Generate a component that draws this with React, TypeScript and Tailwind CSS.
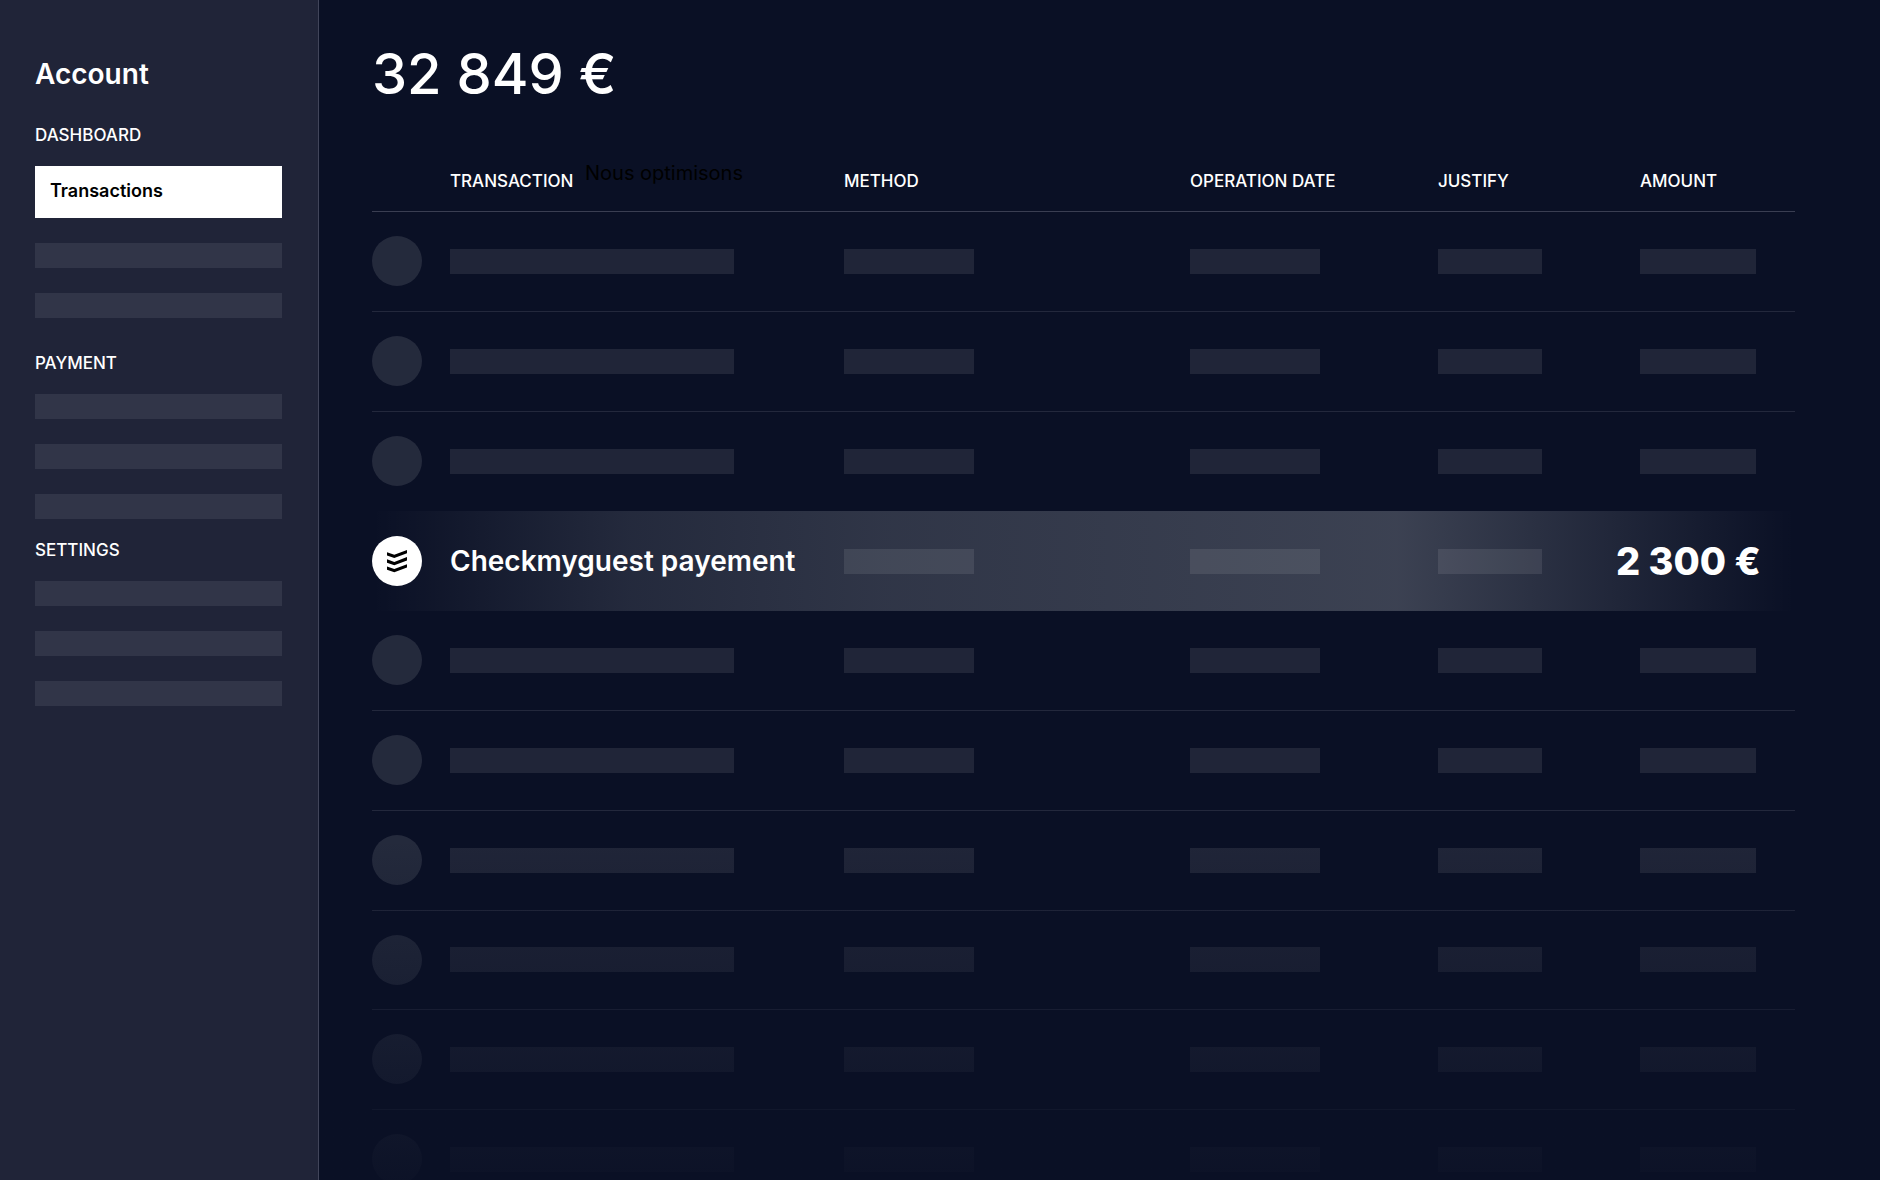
import { FC } from 'react'

interface NavSectionProps {
  title: string
  active?: string
  placeholders: number
  className?: string
}

const columns = ['Transaction', 'Method', 'Operation date', 'Justify', 'Amount']

const rows = Array.from({ length: 10 }, (_, index) => ({
  id: index,
  highlighted: index === 3
}))

const NavSection: FC<NavSectionProps> = ({ title, active, placeholders, className = '' }) => (
  <section className={className}>
    <h2 className="text-[17px] leading-6 font-medium uppercase">{title}</h2>
    <ul className="mt-[19px] flex flex-col gap-[25px]">
      {active && (
        <li>
          <a
            href="#transactions"
            className="flex h-[52px] items-center bg-white px-[15px] pb-0.5 text-lg font-semibold text-black"
          >
            {active}
          </a>
        </li>
      )}
      {Array.from({ length: placeholders }, (_, index) => (
        <li key={index} className="h-[25px] bg-[#313548]" />
      ))}
    </ul>
  </section>
)

const Bar: FC<{ className: string }> = ({ className }) => (
  <div className={`h-[25px] bg-white/9 ${className}`} />
)

const CheckmyguestLogo = () => (
  <div className="flex size-[50px] items-center justify-center rounded-full bg-white">
    <svg viewBox="0 0 20 23" className="h-[23px] w-5 fill-black" aria-hidden="true">
      <path d="M0 2.2 7.3 4.8 20 0v3.3L7.3 8.1 0 5.6z" />
      <path d="M0 9.3 7.3 11.9 20 7.1v3.3L7.3 15.2 0 12.7z" />
      <path d="M0 16.4 7.3 19 20 14.2v3.3L7.3 22.3 0 19.8z" />
    </svg>
  </div>
)

const Row: FC<{ highlighted: boolean }> = ({ highlighted }) => (
  <tr
    className={`h-[100px] nth-[3n+5]:h-[99px] ${
      highlighted
        ? 'bg-[linear-gradient(90deg,transparent,rgba(245,250,250,0.11)_18%,rgba(245,250,250,0.16)_36%,rgba(245,250,250,0.21)_72%,transparent)]'
        : 'border-b border-[#23283c] nth-[3]:border-transparent'
    }`}
  >
    <td>
      {highlighted ? <CheckmyguestLogo /> : <div className="size-[50px] rounded-full bg-white/11" />}
    </td>
    <td className="whitespace-nowrap">
      {highlighted ? (
        <span className="text-[28px] font-semibold">Checkmyguest payement</span>
      ) : (
        <Bar className="w-[284px]" />
      )}
    </td>
    <td>
      <Bar className="w-[130px]" />
    </td>
    <td>
      <Bar className="w-[130px]" />
    </td>
    <td>
      <Bar className="w-[104px]" />
    </td>
    <td className="whitespace-nowrap">
      {highlighted ? (
        <span className="-ml-6 text-[38px] font-extrabold">2 300 €</span>
      ) : (
        <Bar className="w-[116px]" />
      )}
    </td>
  </tr>
)

const App: FC = () => {
  return (
    <div className="flex h-screen overflow-hidden bg-[#0a1025] font-['Inter','Liberation_Sans',sans-serif] text-white">
      <aside className="w-[319px] shrink-0 border-r border-[#41455a] bg-[#202438] pt-[54px] pr-9 pl-[35px]">
        <h1 className="text-[28px] leading-10 font-semibold">Account</h1>
        <nav>
          <NavSection title="Dashboard" active="Transactions" placeholders={2} className="mt-[29px]" />
          <NavSection title="Payment" placeholders={3} className="mt-[33px]" />
          <NavSection title="Settings" placeholders={3} className="mt-[19px]" />
        </nav>
      </aside>

      <main className="relative min-w-0 flex-1 overflow-hidden pt-[38px] pr-[85px] pl-[53px]">
        <p className="text-[56px] leading-[72px] font-medium">32 849 €</p>

        <div className="relative mt-[41px]">
          <span className="absolute top-2 left-[213px] text-xl text-black">Nous optimisons</span>
          <table className="w-full table-fixed border-collapse text-left">
            <colgroup>
              <col className="w-[78px]" />
              <col className="w-[394px]" />
              <col className="w-[346px]" />
              <col className="w-[248px]" />
              <col className="w-[202px]" />
              <col className="w-[155px]" />
            </colgroup>
            <thead>
              <tr className="h-[60px] border-b border-[#3a3e52]">
                <td />
                {columns.map((column) => (
                  <th key={column} scope="col" className="pt-0.5 text-[17px] font-medium uppercase">
                    {column}
                  </th>
                ))}
              </tr>
            </thead>
            <tbody>
              {rows.map((row) => (
                <Row key={row.id} highlighted={row.highlighted} />
              ))}
            </tbody>
          </table>
        </div>

        {/* fades the last rows into the background */}
        <div className="pointer-events-none absolute inset-x-0 bottom-0 h-[340px] bg-linear-to-t from-[#0a1025]/90 to-[#0a1025]/0" />
      </main>
    </div>
  )
}

export default App
